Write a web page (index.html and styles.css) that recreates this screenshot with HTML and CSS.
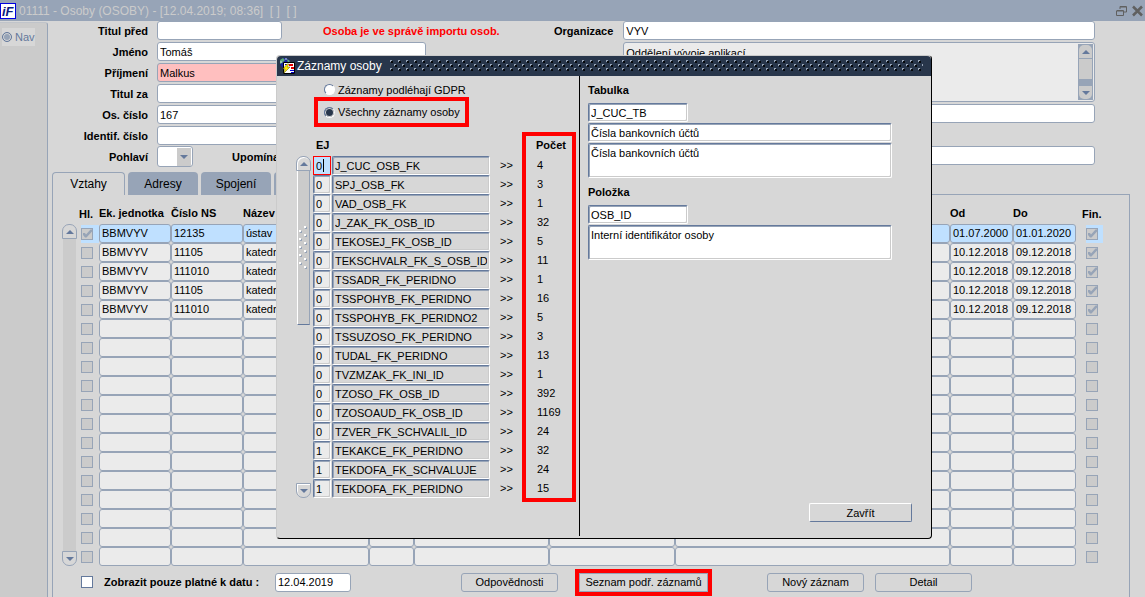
FILE: index.html
```html
<!doctype html>
<html lang="cs">

<head>
    <meta charset="utf-8">
    <title>01111 - Osoby (OSOBY)</title>
    <link rel="stylesheet" href="styles.css">
</head>

<body>
    <div class="titlebar">
        <svg class="logo" width="16" height="16" viewBox="0 0 16 16">
            <rect x="0.5" y="0.5" width="15" height="15" fill="#fff" stroke="#0000e0" />
            <text x="2" y="13" class="logo-text">iF</text>
        </svg>
        <span class="title">01111 - Osoby (OSOBY) - [12.04.2019; 08:36]&nbsp; [ ]&nbsp; [ ]</span>
        <svg width="28" height="12" viewBox="0 0 28 12" fill="none" stroke="#606060">
            <path d="M4 4V1.500h6.500V7H7.500M4 2h6" />
            <path d="M1 5.500h6.500v5H0.500V5.500M1 6h6" />
            <path d="M17 1.500l9 9M26 1.500l-9 9" stroke-width="2.500" />
        </svg>
    </div>

    <div class="window">
        <div class="nav">
            <button class="nav-btn"><span class="nav-dot"></span>Nav</button>
        </div>

        <div class="main">
            <div class="form">
                <div class="form-left">
                    <div class="row">
                        <label for="titul">Titul před</label>
                        <input id="titul" class="field short" type="text">
                        <span class="warning">Osoba je ve správě importu osob.</span>
                    </div>
                    <div class="row">
                        <label for="jmeno">Jméno</label>
                        <input id="jmeno" class="field" type="text" value="Tomáš">
                    </div>
                    <div class="row">
                        <label for="prijmeni">Příjmení</label>
                        <input id="prijmeni" class="field required" type="text" value="Malkus">
                    </div>
                    <div class="row">
                        <label for="titulza">Titul za</label>
                        <input id="titulza" class="field" type="text">
                    </div>
                    <div class="row">
                        <label for="cislo">Os. číslo</label>
                        <input id="cislo" class="field" type="text" value="167">
                    </div>
                    <div class="row">
                        <label for="ident">Identif. číslo</label>
                        <input id="ident" class="field" type="text">
                    </div>
                    <div class="row">
                        <label for="pohlavi">Pohlaví</label>
                        <div class="select">
                            <select id="pohlavi">
                                <option></option>
                            </select>
                            <svg width="14" height="18" viewBox="0 0 14 18"><path d="M3 7h8l-4 4z" fill="#64799c" /></svg>
                        </div>
                        <span class="upominat">Upomínat</span>
                    </div>
                </div>
                <div class="form-right">
                    <label for="org">Organizace</label>
                    <input id="org" class="field" type="text" value="VYV">
                    <div class="memo">
                        <textarea class="field" aria-label="Popis organizace">Oddělení vývoje aplikací</textarea>
                        <div class="memo-scroll">
                            <button aria-label="Nahoru"><svg width="8" height="4" viewBox="0 0 8 4"><path d="M0 4l4-4 4 4z" /></svg></button>
                            <span class="memo-thumb"></span>
                            <button aria-label="Dolů"><svg width="8" height="4" viewBox="0 0 8 4"><path d="M0 0h8l-4 4z" /></svg></button>
                        </div>
                    </div>
                    <input class="field" type="text" aria-label="Údaj 1">
                    <input class="field last" type="text" aria-label="Údaj 2">
                </div>
            </div>

            <div class="tabs">
                <button class="tab active">Vztahy</button>
                <button class="tab">Adresy</button>
                <button class="tab">Spojení</button>
                <button class="tab" aria-label="Další"></button>
                <span class="tabs-line"></span>
            </div>

            <div class="panel">
                <div class="grid">
                    <div class="scroll">
                        <button class="up" aria-label="Nahoru"><svg width="8" height="4" viewBox="0 0 8 4"><path d="M0 4l4-4 4 4z" /></svg></button>
                        <span class="track"></span>
                        <button class="down" aria-label="Dolů"><svg width="8" height="4" viewBox="0 0 8 4"><path d="M0 0h8l-4 4z" /></svg></button>
                    </div>
                    <table class="relations">
                        <colgroup>
                            <col class="c-check">
                            <col class="c-unit">
                            <col class="c-unit">
                            <col class="c-name">
                            <col class="c-small">
                            <col class="c-mid">
                            <col class="c-name">
                            <col>
                            <col class="c-date">
                            <col class="c-date">
                            <col class="c-fin">
                        </colgroup>
                        <thead>
                            <tr>
                                <th class="hl">Hl.</th>
                                <th>Ek. jednotka</th>
                                <th>Číslo NS</th>
                                <th>Název</th>
                                <th></th>
                                <th></th>
                                <th></th>
                                <th></th>
                                <th>Od</th>
                                <th>Do</th>
                                <th class="fin">Fin.</th>
                            </tr>
                        </thead>
                        <tbody id="relations"></tbody>
                    </table>
                </div>

                <div class="footer">
                    <label class="valid"><input type="checkbox"> Zobrazit pouze platné k datu :</label>
                    <input class="field date" type="text" value="12.04.2019" aria-label="Datum">
                    <button class="btn first">Odpovědnosti</button>
                    <button class="btn marked">Seznam podř. záznamů</button>
                    <button class="btn">Nový záznam</button>
                    <button class="btn">Detail</button>
                </div>
            </div>
        </div>
    </div>

    <div class="dialog" role="dialog" aria-labelledby="dlg-title">
        <div class="dialog-title">
            <svg width="16" height="16" viewBox="0 0 16 16">
                <circle cx="6" cy="5" r="5" fill="#1824a0" />
                <path d="M1 2l3-2 2 2-3 3-2 1zM8 1l3 2-2 2z" fill="#58a878" />
                <path d="M1 4h2M6 1h2M10 5h2" stroke="#d0e0f0" />
                <path d="M4.500 4.500h11v11h-11z" fill="#fff" stroke="#000" />
                <path d="M10 7h4M12 10h3" stroke="#e00000" stroke-width="2" />
                <path d="M11 12.500h4M12 14.500h3M6 6.500h3" stroke="#0000d0" />
                <path d="M8 6h2l-2 3h3l-6 6 1-4H4z" fill="#ffe800" stroke="#606000" stroke-width="0.500" />
            </svg>
            <span id="dlg-title">Záznamy osoby</span>
            <svg class="dots" height="12">
                <defs>
                    <pattern id="dots" width="8" height="8" patternUnits="userSpaceOnUse">
                        <path d="M1 1h2v2H1zM5 5h2v2H5z" fill="#05080c" />
                        <path d="M0 0h2v1H1v1H0zM4 4h2v1H5v1H4z" fill="#97a4b7" />
                    </pattern>
                </defs>
                <rect width="100%" height="12" fill="url(#dots)" />
            </svg>
        </div>
        <div class="dialog-body">
            <div class="records">
                <label class="option"><input type="radio" name="scope"> Záznamy podléhají GDPR</label>
                <label class="option boxed"><input type="radio" name="scope" checked> Všechny záznamy osoby</label>
                <div class="list">
                    <div class="scroll light">
                        <button class="up" aria-label="Nahoru"><svg width="8" height="4" viewBox="0 0 8 4"><path d="M0 4l4-4 4 4z" /></svg></button>
                        <span class="thumb">
                            <svg width="11" height="44" viewBox="0 0 11 44">
                                <defs>
                                    <pattern id="grip" width="11" height="8" patternUnits="userSpaceOnUse">
                                        <path d="M7 1h2v2H7zM2 5h2v2H2z" fill="#97a4b7" />
                                        <path d="M6 0h2v2H6zM1 4h2v2H1z" fill="#fff" />
                                    </pattern>
                                </defs>
                                <rect width="11" height="44" fill="url(#grip)" />
                            </svg>
                        </span>
                        <span class="space"></span>
                        <button class="down" aria-label="Dolů"><svg width="8" height="4" viewBox="0 0 8 4"><path d="M0 0h8l-4 4z" /></svg></button>
                    </div>
                    <table class="counts">
                        <colgroup>
                            <col class="c-ej">
                            <col class="c-key">
                            <col class="c-arrows">
                            <col>
                        </colgroup>
                        <thead>
                            <tr>
                                <th>EJ</th>
                                <th></th>
                                <th></th>
                                <th>Počet</th>
                            </tr>
                        </thead>
                        <tbody id="counts"></tbody>
                    </table>
                    <span class="mark"></span>
                </div>
            </div>
            <div class="detail">
                <label for="tabulka">Tabulka</label>
                <input id="tabulka" class="inset code" type="text" value="J_CUC_TB">
                <input class="inset" type="text" value="Čísla bankovních účtů" aria-label="Název tabulky">
                <textarea class="inset" aria-label="Popis tabulky">Čísla bankovních účtů</textarea>
                <label for="polozka">Položka</label>
                <input id="polozka" class="inset code" type="text" value="OSB_ID">
                <textarea class="inset" aria-label="Popis položky">Interní identifikátor osoby</textarea>
                <button class="close">Zavřít</button>
            </div>
        </div>
    </div>

    <script src="main.js"></script>
</body>

</html>
```
FILE: styles.css
```css
* {
    margin: 0;
    padding: 0;
    box-sizing: border-box;
}

html,
body {
    height: 100%;
}

body,
input,
textarea,
select,
button {
    font-family: "Liberation Sans", Arial, sans-serif;
    font-size: 11px;
    color: #000;
}

body {
    display: flex;
    flex-direction: column;
    overflow: hidden;
    background: #d7d7d7;
}

svg {
    display: block;
    flex: none;
}

textarea {
    resize: none;
    overflow: hidden;
}

/* main window */
.titlebar {
    display: flex;
    align-items: center;
    gap: 3px;
    height: 21px;
    padding-right: 1px;
    background: #97a4b7;
}

.logo-text {
    font: italic bold 13px "Liberation Sans", Arial, sans-serif;
    fill: #0a1a80;
}

.title {
    flex: 1;
    font-size: 12px;
    color: #cbcbcb;
}

.window {
    flex: 1;
    display: flex;
    min-height: 0;
}

.nav {
    width: 48px;
    margin-top: 1px;
    padding: 5px 2px;
    background: #cbcbcb;
    border-top: 1px solid #c0c4ca;
    border-right: 1px solid #97a4b7;
    border-top-right-radius: 3px;
}

.nav-btn {
    display: flex;
    align-items: center;
    gap: 3px;
    height: 18px;
    border: 0;
    background: #d7d7d7;
    color: #64799c;
}

.nav-dot {
    width: 10px;
    height: 10px;
    border: 1px solid #64799c;
    border-radius: 50%;
    background: #97a4b7;
    box-shadow: inset 0 0 0 1px #d7d7d7;
}

.main {
    flex: 1;
    display: flex;
    flex-direction: column;
    min-width: 0;
    padding: 0 15px 0 4px;
}

/* form */
.form {
    display: flex;
    padding-right: 35px;
}

.form-left {
    width: 472px;
}

.row {
    display: flex;
    align-items: center;
    height: 21px;
    padding-bottom: 2px;
}

.form label,
.upominat {
    font-weight: bold;
}

.row label {
    width: 96px;
    margin-right: 9px;
    text-align: right;
}

.field {
    width: 269px;
    height: 19px;
    padding: 0 2px;
    border: 1px solid #97a4b7;
    border-radius: 3px;
    background: #fff;
}

.short {
    width: 125px;
}

.required {
    background: #ffbfbf;
}

.warning {
    margin-left: 41px;
    font-weight: bold;
    color: #f00;
}

.select {
    display: flex;
    align-items: center;
    width: 36px;
    height: 21px;
    border: 1px solid #97a4b7;
    border-radius: 3px;
    background: #fff;
}

.select select {
    flex: 1;
    min-width: 0;
    height: 18px;
    border: 0;
    background: transparent;
    appearance: none;
}

.select svg {
    margin-right: 1px;
    background: #cbcbcb;
}

.upominat {
    margin-left: 39px;
}

.form-right {
    flex: 1;
    display: grid;
    grid-template-columns: auto 1fr;
    grid-template-rows: 19px 60px 19px 19px;
    column-gap: 10px;
    row-gap: 2px;
    align-items: center;
    padding-left: 30px;
}

.form-right .field {
    grid-column: 2;
    width: 100%;
}

.form-right .last {
    margin-top: 42px;
}

.memo {
    grid-column: 2;
    display: flex;
    height: 60px;
    border: 1px solid #97a4b7;
    border-radius: 3px;
    background: #ebebeb;
}

.memo .field {
    flex: 1;
    height: 58px;
    padding-top: 4px;
    border: 0;
    background: transparent;
}

.memo-scroll {
    display: flex;
    flex-direction: column;
    width: 15px;
    margin: 1px;
    border: 1px solid #97a4b7;
    background: #97a4b7;
}

.memo-scroll button {
    display: flex;
    align-items: center;
    justify-content: center;
    height: 13px;
    border: 0;
    border-radius: 5px 5px 0 0;
    background: #cbcbcb;
}

.memo-scroll button:last-child {
    border-radius: 0 0 5px 5px;
}

.memo-scroll path,
.scroll button path {
    fill: #64799c;
}

.memo-thumb {
    flex: 1;
    margin: 1px 0 7px;
    background: #cbcbcb;
}

/* tabs */
.tabs {
    display: flex;
    gap: 3px;
    height: 23px;
    margin-top: 4px;
}

.tab {
    width: 70px;
    border: 0;
    border-radius: 4px 4px 0 0;
    background: #97a4b7;
    font-size: 12px;
}

.tab.active {
    width: 73px;
    border: 1px solid #97a4b7;
    border-bottom: 0;
    background: transparent;
}

.tabs-line {
    flex: 1;
    margin-left: -3px;
    border-bottom: 1px solid #97a4b7;
}

.panel {
    flex: 1;
    padding: 0 26px 0 9px;
    border: 1px solid #97a4b7;
    border-top: 0;
    border-bottom: 0;
}

.grid {
    display: flex;
    gap: 2px;
}

/* block scrollbar */
.scroll {
    display: flex;
    flex-direction: column;
    width: 15px;
    margin-top: 29px;
}

.scroll button {
    display: flex;
    align-items: center;
    justify-content: center;
    height: 15px;
    border: 1px solid #97a4b7;
    background: #d7d7d7;
}

.scroll .up {
    border-radius: 7px 7px 0 0;
}

.scroll .down {
    border-radius: 0 0 7px 7px;
}

.track {
    flex: 1;
    margin: 0 1px;
    background: #cbcbcb;
}

/* relations table */
.relations {
    flex: 1;
    width: 100%;
    table-layout: fixed;
    border-collapse: separate;
    border-spacing: 0;
}

.c-check { width: 20px; }
.c-unit { width: 72px; }
.c-name { width: 126px; }
.c-small { width: 45px; }
.c-mid { width: 135px; }
.c-date { width: 63px; }
.c-fin { width: 27px; }

.relations th {
    height: 29px;
    padding-top: 7px;
    text-align: left;
    white-space: nowrap;
    vertical-align: middle;
}

.relations th.hl,
.relations th.fin {
    padding-top: 9px;
}

.relations th.fin {
    padding-left: 6px;
}

.relations td {
    height: 19px;
    padding: 0 2px;
    border: 1px solid #97a4b7;
    border-radius: 3px;
    background: #ebebeb;
    line-height: 17px;
    white-space: nowrap;
    overflow: hidden;
}

.relations td.check {
    padding: 0 0 0 2px;
    border: 0;
    border-radius: 0;
    background: none;
}

.relations td.check:last-child {
    padding-left: 10px;
}

.relations td.check span {
    display: flex;
    align-items: center;
    height: 18px;
}

.relations .selected td,
.relations .selected td.check span {
    background: #bfe0ff;
}

.relations .selected td.check {
    background: none;
}

input[type=checkbox] {
    width: 12px;
    height: 12px;
    border: 1px solid #64799c;
    background: #fff;
    appearance: none;
}

.relations input[type=checkbox] {
    border-color: #97a4b7;
    background: #cbcbcb;
}

.relations input[type=checkbox]:checked::before {
    content: "";
    display: block;
    width: 10px;
    height: 10px;
    background: #97a4b7;
    clip-path: polygon(10% 45%, 30% 45%, 40% 60%, 85% 10%, 100% 10%, 100% 30%, 45% 90%, 30% 90%, 10% 65%);
}

/* footer */
.footer {
    display: flex;
    align-items: center;
    height: 31px;
    padding-top: 1px;
    padding-left: 19px;
}

.valid {
    display: flex;
    align-items: center;
    gap: 11px;
    width: 194px;
    font-weight: bold;
}

.date {
    width: 76px;
}

.btn {
    width: 97px;
    height: 19px;
    margin-right: 11px;
    border: 1px solid #97a4b7;
    border-radius: 3px;
    background: #d7d7d7;
}

.btn.first {
    margin-left: 110px;
    margin-right: 21px;
}

.btn.marked {
    width: 129px;
    margin-right: 59px;
    border-radius: 0;
    outline: 4px solid #f00;
}

/* dialog */
.dialog {
    position: absolute;
    top: 55px;
    left: 276px;
    right: 213px;
    border: 1px solid #cbcbcb;
    border-right-color: #000;
    border-bottom-color: #000;
    border-radius: 4px;
    background: #d7d7d7;
}

.dialog-title {
    display: flex;
    align-items: center;
    gap: 2px;
    height: 20px;
    padding: 0 8px 0 2px;
    border-radius: 4px 4px 0 0;
    background: #28364b;
    color: #fff;
    font-size: 12px;
}

.dots {
    flex: 1;
    margin-left: 6px;
}

.dialog-body {
    display: flex;
}

.records {
    flex: none;
    width: 303px;
    margin-bottom: 2px;
    padding: 6px 3px 38px 19px;
    border-right: 1px solid #000;
}

.option {
    display: flex;
    align-items: center;
    gap: 3px;
    height: 15px;
    margin-left: 28px;
}

.option.boxed {
    width: 155px;
    height: 30px;
    margin-left: 18px;
    padding-left: 6px;
    border: 4px solid #f00;
    white-space: nowrap;
}

.option input {
    width: 11px;
    height: 11px;
    border: 1px solid #64799c;
    border-right-color: #fff;
    border-bottom-color: #fff;
    border-radius: 50%;
    background: #fff;
    appearance: none;
}

.option input:checked {
    background: #28364b;
    box-shadow: inset 0 0 0 1px #d7d7d7;
}

.list {
    position: relative;
    display: flex;
    gap: 2px;
    margin-top: 7px;
}

.light {
    margin-top: 22px;
}

.light button {
    box-shadow: inset 1px 1px #fff;
}

.thumb {
    display: flex;
    align-items: center;
    justify-content: center;
    height: 154px;
    margin: 0 1px;
    border-left: 1px solid #fff;
    border-right: 1px solid #97a4b7;
    border-bottom: 1px solid #64799c;
    background: #cbcbcb;
}

.space {
    flex: 1;
}

.counts {
    flex: 1;
    table-layout: fixed;
    border-collapse: separate;
    border-spacing: 0;
}

.c-ej { width: 19px; }
.c-key { width: 159px; }
.c-arrows { width: 42px; }

.counts th {
    height: 22px;
    padding-left: 3px;
    text-align: left;
}

.counts td {
    height: 19px;
    line-height: 19px;
    vertical-align: top;
}

.counts input {
    display: block;
}

.arrows {
    padding-left: 9px;
}

.counts td.count {
    padding-left: 4px;
}

.inset {
    width: 100%;
    height: 19px;
    padding: 0 2px;
    border: 1px solid #64799c;
    border-right-color: #fff;
    border-bottom-color: #fff;
    border-radius: 2px;
    background: #fff;
    box-shadow: inset 1px 1px #97a4b7, inset -1px -1px #cbcbcb;
}

.counts .inset {
    width: 158px;
    background: #d7d7d7;
}

.counts .ej .inset {
    width: 18px;
    background: #ebebeb;
}

.counts .current .ej .inset {
    border: 1px solid #f00;
    border-radius: 0;
    background: linear-gradient(#000, #000) 9px 2px / 1px 13px no-repeat #bfe0ff;
    box-shadow: none;
}

/* frame round the count column */
.mark {
    position: absolute;
    top: -2px;
    right: 0;
    bottom: -4px;
    width: 54px;
    border: 4px solid #f00;
}

.detail {
    flex: 1;
    display: flex;
    flex-direction: column;
    gap: 1px;
    padding: 8px 39px 16px 8px;
}

.detail label {
    height: 14px;
    margin-bottom: 4px;
    font-weight: bold;
}

.detail textarea {
    height: 35px;
    padding-top: 3px;
}

.detail textarea + label {
    margin-top: 7px;
}

.detail .code {
    width: 100px;
}

.close {
    width: 103px;
    height: 19px;
    margin-top: auto;
    margin-left: auto;
    margin-right: -20px;
    border: 1px solid #64799c;
    border-top-color: #fff;
    border-left-color: #fff;
    border-radius: 2px;
    background: #d7d7d7;
}
```
FILE: main.js
```javascript
var relations = [
    ["BBMVYV", "12135", "ústav", "01.07.2000", "01.01.2020"],
    ["BBMVYV", "11105", "katedra", "10.12.2018", "09.12.2018"],
    ["BBMVYV", "111010", "katedra", "10.12.2018", "09.12.2018"],
    ["BBMVYV", "11105", "katedra", "10.12.2018", "09.12.2018"],
    ["BBMVYV", "111010", "katedra", "10.12.2018", "09.12.2018"]
];

var counts = [
    [0, "J_CUC_OSB_FK", 4],
    [0, "SPJ_OSB_FK", 3],
    [0, "VAD_OSB_FK", 1],
    [0, "J_ZAK_FK_OSB_ID", 32],
    [0, "TEKOSEJ_FK_OSB_ID", 5],
    [0, "TEKSCHVALR_FK_S_OSB_ID", 11],
    [0, "TSSADR_FK_PERIDNO", 1],
    [0, "TSSPOHYB_FK_PERIDNO", 16],
    [0, "TSSPOHYB_FK_PERIDNO2", 5],
    [0, "TSSUZOSO_FK_PERIDNO", 3],
    [0, "TUDAL_FK_PERIDNO", 13],
    [0, "TVZMZAK_FK_INI_ID", 1],
    [0, "TZOSO_FK_OSB_ID", 392],
    [0, "TZOSOAUD_FK_OSB_ID", 1169],
    [0, "TZVER_FK_SCHVALIL_ID", 24],
    [1, "TEKAKCE_FK_PERIDNO", 32],
    [1, "TEKDOFA_FK_SCHVALUJE", 24],
    [1, "TEKDOFA_FK_PERIDNO", 15]
];

// the block always shows 18 rows, the unused ones stay empty
var rowCount = 18;

function check(name, on) {
    return '<td class="check"><span><input type="checkbox" aria-label="' + name + '"' + (on ? " checked" : "") + '></span></td>';
}

var html = "";
for (var i = 0; i < rowCount; i++) {
    var r = relations[i] || ["", "", "", "", ""];
    html += '<tr' + (i == 0 ? ' class="selected"' : "") + '>' + check("Hl.", i == 0);
    html += "<td>" + r[0] + "</td><td>" + r[1] + "</td><td>" + r[2] + "</td>";
    html += "<td></td><td></td><td></td><td></td>";
    html += "<td>" + r[3] + "</td><td>" + r[4] + "</td>";
    html += check("Fin.", i < relations.length) + "</tr>";
}
document.getElementById("relations").innerHTML = html;

html = "";
for (var i = 0; i < counts.length; i++) {
    var c = counts[i];
    html += '<tr' + (i == 0 ? ' class="current"' : "") + '>';
    html += '<td class="ej"><input class="inset" type="text" aria-label="EJ" value="' + c[0] + '"></td>';
    html += '<td><input class="inset" type="text" aria-label="Vazba" value="' + c[1] + '"></td>';
    html += '<td class="arrows">&gt;&gt;</td><td class="count">' + c[2] + "</td></tr>";
}
document.getElementById("counts").innerHTML = html;
```
